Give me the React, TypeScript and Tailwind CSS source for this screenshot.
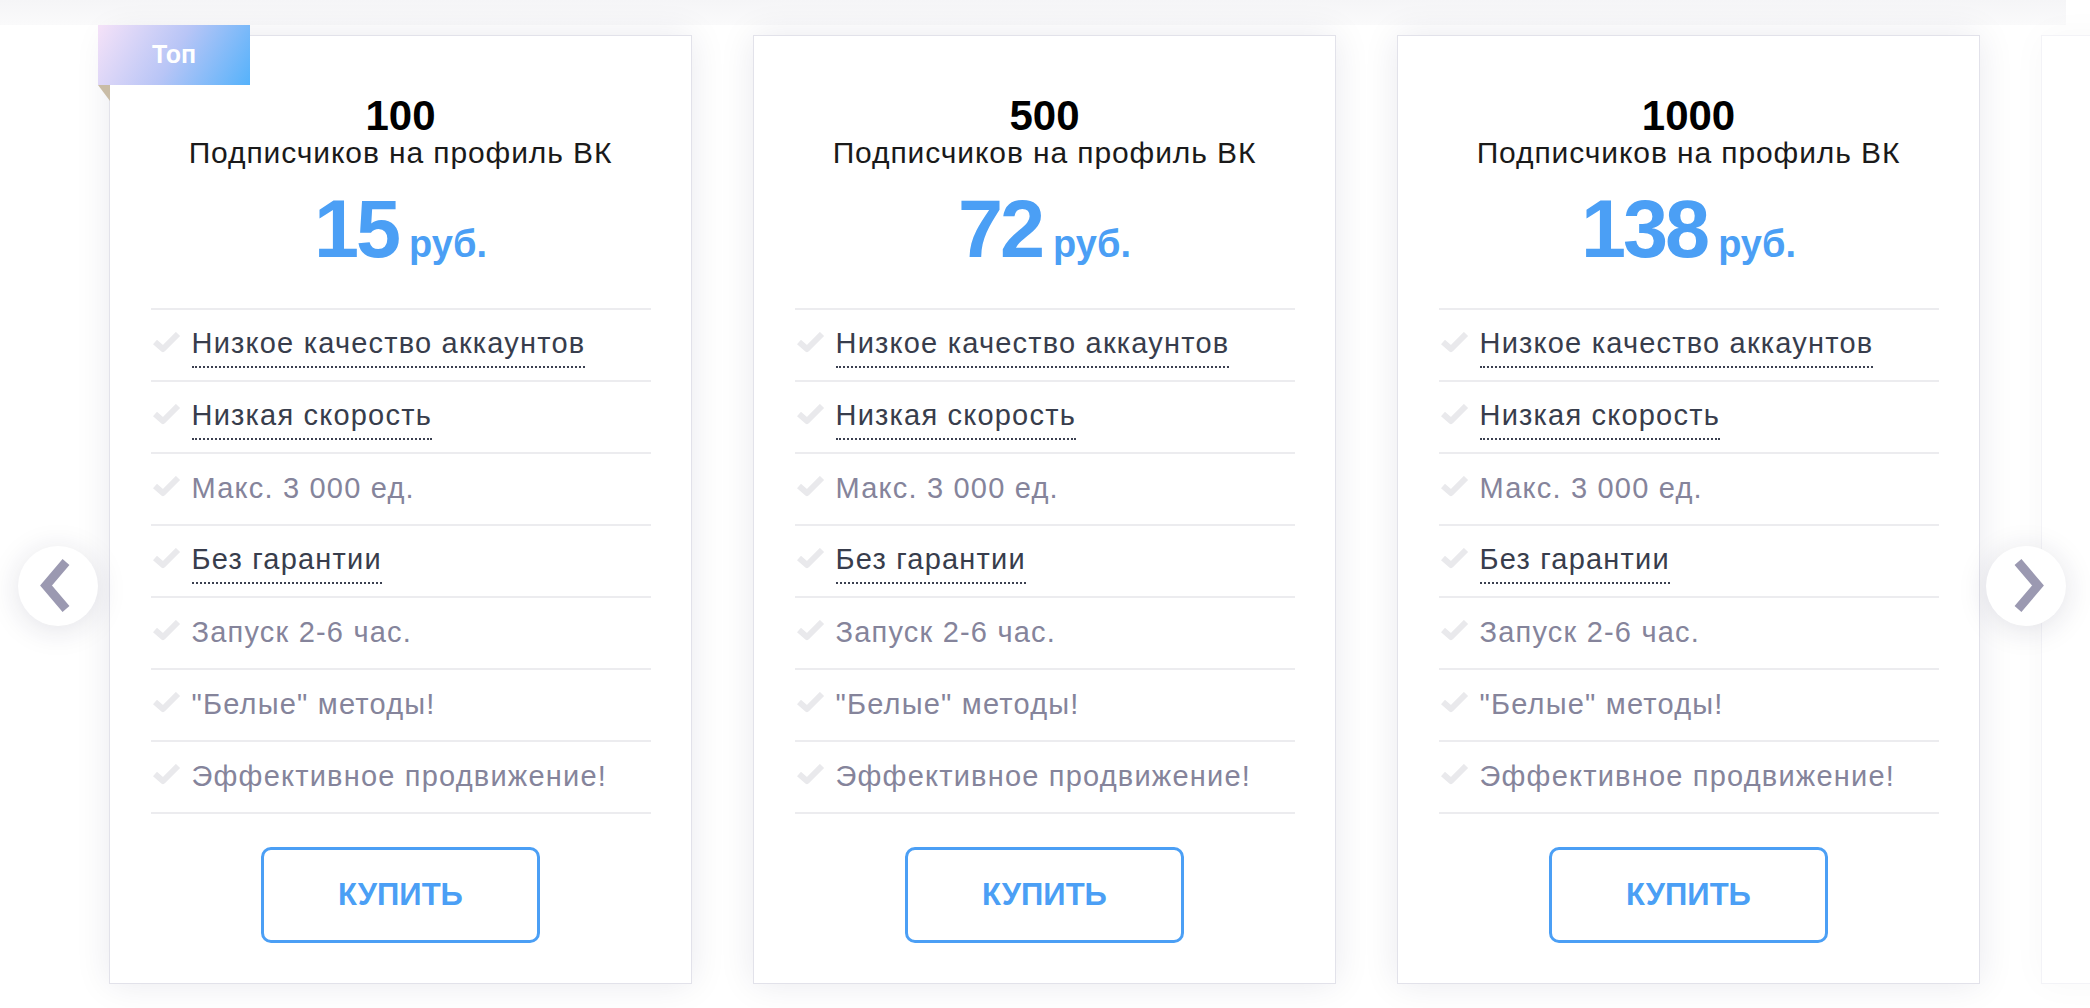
import React from "react"

type Plan = { qty: string; price: string; top?: boolean }

const plans: Plan[] = [
  { qty: "100", price: "15", top: true },
  { qty: "500", price: "72" },
  { qty: "1000", price: "138" },
]

const features: { text: string; hint: boolean }[] = [
  { text: "Низкое качество аккаунтов", hint: true },
  { text: "Низкая скорость", hint: true },
  { text: "Макс. 3 000 ед.", hint: false },
  { text: "Без гарантии", hint: true },
  { text: "Запуск 2-6 час.", hint: false },
  { text: "\"Белые\" методы!", hint: false },
  { text: "Эффективное продвижение!", hint: false },
]

function Check() {
  return (
    <svg width="29" height="21" viewBox="0 0 29 21" className="shrink-0 -mt-[5px]">
      <polyline points="3,10 11,17 26,2" fill="none" stroke="#e9e9ec" strokeWidth="6" strokeLinejoin="round" />
    </svg>
  )
}

function Card({ plan }: { plan: Plan }) {
  return (
    <div className="relative w-[583px] shrink-0 bg-white border border-[#e2e2ea] shadow-[0_0_34px_rgba(25,25,70,0.09)] flex flex-col items-center pt-[60px] pb-[40px]">
      {plan.top && (
        <>
          <div className="absolute -left-[12px] -top-[11px] w-[152px] h-[60px] bg-[linear-gradient(120deg,#f5e2f8_0%,#b8c5f6_50%,#55b2fb_100%)] flex items-center justify-center text-white text-[25px] font-bold">
            Топ
          </div>
          <svg width="12" height="16" viewBox="0 0 12 16" className="absolute -left-[12px] top-[49px]">
            <polygon points="0,0 12,0 12,16" fill="#c9bca6" />
          </svg>
        </>
      )}
      <div className="text-[42px] leading-[40px] font-bold text-black">{plan.qty}</div>
      <div className="text-[30px] leading-[34px] tracking-[0.9px] text-[#1a1a1a]">Подписчиков на профиль ВК</div>
      <div className="mt-[19px] h-[80px] flex items-baseline text-[#4b9ff5] font-bold">
        <span className="text-[81px] leading-[80px] tracking-[-3px]">{plan.price}</span>
        <span className="ml-[11px] text-[38px] leading-[38px]">руб.</span>
      </div>
      <div className="mt-[39px] w-[500px] border-t-2 border-[#ececef]">
        {features.map((f) => (
          <div key={f.text} className="h-[72px] border-b-2 border-[#ececef] flex items-center gap-[11px] pl-[1px]">
            <Check />
            {f.hint ? (
              <span className="text-[29px] tracking-[1.2px] text-[#383d4c] border-b-2 border-dotted border-[#3b4050] pb-[1px]">{f.text}</span>
            ) : (
              <span className="text-[29px] tracking-[1.2px] text-[#85849b]">{f.text}</span>
            )}
          </div>
        ))}
      </div>
      <button className="mt-[33px] w-[279px] h-[96px] border-[3px] border-[#4b9ff5] rounded-[10px] text-[31px] font-bold text-[#4b9ff5] bg-white">
        КУПИТЬ
      </button>
    </div>
  )
}

function Arrow({ dir }: { dir: "left" | "right" }) {
  return (
    <button
      className={`absolute top-[546px] w-[80px] h-[80px] rounded-full bg-white shadow-[0_4px_30px_rgba(30,30,70,0.13)] ${dir === "left" ? "left-[18px]" : "left-[1986px]"}`}
    >
      <svg width="80" height="80" viewBox="0 0 80 80">
        {dir === "left" ? (
          <polyline points="48,16 28,39.5 48,63" fill="none" stroke="#9b99b1" strokeWidth="9" />
        ) : (
          <polyline points="32,16 52,39.5 32,63" fill="none" stroke="#9b99b1" strokeWidth="9" />
        )}
      </svg>
    </button>
  )
}

export default function App() {
  return (
    <div className="relative w-[2090px] h-[1008px] overflow-hidden bg-white font-['Liberation_Sans',Arial,sans-serif]">
      <div className="h-[25px] w-[2066px] bg-[linear-gradient(180deg,#f5f5f7,#fafafb)]" />
      <div className="flex gap-[61px] pl-[109px] mt-[10px]">
        {plans.map((p) => (
          <Card key={p.qty} plan={p} />
        ))}
        <div className="w-[583px] h-[949px] shrink-0 bg-white border border-[#f3f3f7] shadow-[0_0_34px_rgba(25,25,70,0.03)]" />
      </div>
      <Arrow dir="left" />
      <Arrow dir="right" />
    </div>
  )
}
